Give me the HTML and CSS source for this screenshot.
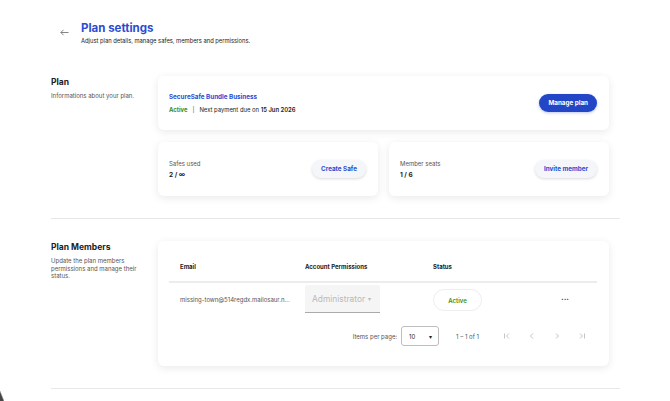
FILE: index.html
```html
<!DOCTYPE html>
<html>
    <head>
        <meta charset="utf-8">
        <meta name="viewport" content="width=device-width, initial-scale=1.0">
        <title>Plan settings</title>
        <link rel="stylesheet" href="styles.css">
    </head>
    <body>
        <div class="page">
            <div class="top">
                <button class="back" type="button" aria-label="Back">
                    <svg width="9" height="7" viewBox="0 0 9 7"><path d="M3.5 0.8 L0.9 3.5 L3.5 6.2 M0.9 3.5 H8.5" fill="none" stroke="#666" stroke-width="0.8"/></svg>
                </button>
                <div>
                    <h1>Plan settings</h1>
                    <p class="subtitle">Adjust plan details, manage safes, members and permissions.</p>
                </div>
            </div>

            <div class="section section--plan">
                <div class="section-info">
                    <h2>Plan</h2>
                    <p>Informations about your plan.</p>
                </div>
                <div class="section-body">
                    <div class="card plan-card">
                        <div>
                            <div class="plan-name">SecureSafe Bundle Business</div>
                            <div class="plan-status"><span class="green">Active</span><span class="sep">|</span>Next payment due on <b>15 Jun 2026</b></div>
                        </div>
                        <button class="btn btn--primary" type="button">Manage plan</button>
                    </div>
                    <div class="stats">
                        <div class="card stat-card">
                            <div>
                                <div class="stat-label">Safes used</div>
                                <div class="stat-value">2 / ∞</div>
                            </div>
                            <button class="btn btn--light" type="button">Create Safe</button>
                        </div>
                        <div class="card stat-card">
                            <div>
                                <div class="stat-label">Member seats</div>
                                <div class="stat-value">1 / 6</div>
                            </div>
                            <button class="btn btn--light" type="button">Invite member</button>
                        </div>
                    </div>
                </div>
            </div>

            <div class="divider"></div>

            <div class="section">
                <div class="section-info">
                    <h2>Plan Members</h2>
                    <p>Update the plan members permissions and manage their status.</p>
                </div>
                <div class="section-body">
                    <div class="card members-card">
                        <div class="table-row table-head">
                            <div class="cell">Email</div>
                            <div class="cell">Account Permissions</div>
                            <div class="cell">Status</div>
                            <div class="cell"></div>
                        </div>
                        <div class="table-row table-line">
                            <div class="cell email">missing-town@514regdx.mailosaur.n...</div>
                            <div class="cell">
                                <div class="perm-select">Administrator <span class="caret">▾</span></div>
                            </div>
                            <div class="cell">
                                <span class="status-pill">Active</span>
                            </div>
                            <div class="cell more">···</div>
                        </div>
                        <div class="paginator">
                            <span class="pg-label">Items per page:</span>
                            <div class="pg-select">10 <span class="caret">▾</span></div>
                            <span class="pg-range">1 – 1 of 1</span>
                            <div class="pg-nav">
                                <svg width="8" height="8" viewBox="0 0 8 8"><path d="M1.5 1.5 V6.5 M6 1.5 L3.5 4 L6 6.5" fill="none" stroke="#aaa" stroke-width="0.7"/></svg>
                                <svg width="8" height="8" viewBox="0 0 8 8"><path d="M5 1.5 L2.5 4 L5 6.5" fill="none" stroke="#aaa" stroke-width="0.7"/></svg>
                                <svg width="8" height="8" viewBox="0 0 8 8"><path d="M3 1.5 L5.5 4 L3 6.5" fill="none" stroke="#aaa" stroke-width="0.7"/></svg>
                                <svg width="8" height="8" viewBox="0 0 8 8"><path d="M2 1.5 L4.5 4 L2 6.5 M6.5 1.5 V6.5" fill="none" stroke="#aaa" stroke-width="0.7"/></svg>
                            </div>
                        </div>
                    </div>
                </div>
            </div>

            <div class="divider"></div>
        </div>
        <div class="corner"></div>
    </body>
</html>
```

FILE: styles.css
```css
:root {
    --blue: rgb(43, 76, 208);
    --blue-dark: rgb(35, 70, 198);
    --green: rgb(62, 140, 32);
    --text: rgb(34, 34, 34);
    --muted: rgb(85, 85, 85);
    --line: rgb(232, 232, 232);
}

body {
    margin: 0;
    background-color: #fff;
    color: var(--text);
    font-family: Inter, "Noto Sans", sans-serif;
    overflow: hidden;
}

.page {
    padding: 0 50px 0 51px;
}

.top {
    display: flex;
    align-items: flex-start;
    gap: 12px;
    padding: 22px 0 0 9px;
    height: 54px;
}

.back {
    border: none;
    background: none;
    padding: 0;
    margin-top: 7px;
    display: flex;
    cursor: pointer;
}

h1 {
    margin: 0;
    font-size: 11.5px;
    line-height: 13px;
    font-weight: 700;
    color: var(--blue);
}

.subtitle {
    margin: 2px 0 0;
    font-size: 5.8px;
    color: var(--text);
}

.section {
    display: flex;
    padding: 22px 0;
}

.section--plan {
    padding-top: 0;
}

.section-info {
    width: 107px;
    flex-shrink: 0;
    padding-top: 1px;
}

.section-info h2 {
    margin: 0 0 5px;
    font-size: 8.5px;
    font-weight: 700;
}

.section-info p {
    margin: 0;
    width: 86px;
    font-size: 6px;
    line-height: 7.5px;
    color: var(--muted);
}

.section-body {
    width: 451px;
    display: flex;
    flex-direction: column;
    gap: 12px;
}

.card {
    background-color: #fff;
    border-radius: 6px;
    box-shadow: 0 2px 9px rgba(0, 0, 0, 0.09);
}

.plan-card {
    height: 54px;
    box-sizing: border-box;
    display: flex;
    align-items: center;
    justify-content: space-between;
    padding: 0 12px 0 11px;
}

.plan-name {
    font-size: 6.3px;
    font-weight: 700;
    color: var(--blue);
    margin-bottom: 5px;
}

.plan-status {
    font-size: 5.9px;
    color: var(--text);
}

.plan-status b {
    font-weight: 600;
}

.green {
    color: var(--green);
    font-weight: 700;
}

.sep {
    margin: 0 5px;
    color: var(--muted);
}

.btn {
    height: 18px;
    border: none;
    border-radius: 9px;
    padding: 0 9px;
    font-family: inherit;
    font-size: 6.3px;
    font-weight: 700;
    cursor: pointer;
}

.btn--primary {
    background-color: var(--blue-dark);
    color: #fff;
    box-shadow: 0 1px 3px rgba(35, 70, 198, 0.3);
}

.btn--light {
    background-color: rgb(245, 246, 249);
    color: var(--blue);
    box-shadow: 0 1px 3px rgba(0, 0, 0, 0.15);
}

.stats {
    display: flex;
    gap: 11px;
}

.stat-card {
    flex: 1;
    height: 54px;
    box-sizing: border-box;
    display: flex;
    align-items: center;
    justify-content: space-between;
    padding: 0 12px 0 11px;
}

.stat-label {
    font-size: 6px;
    color: var(--muted);
    margin-bottom: 4px;
}

.stat-value {
    font-size: 6.5px;
    font-weight: 700;
}

.divider {
    height: 1px;
    background-color: var(--line);
}

.members-card {
    padding: 10px 12px 0 11px;
    height: 125px;
    box-sizing: border-box;
}

.table-row {
    display: grid;
    grid-template-columns: 125px 128px 1fr 42px;
    align-items: center;
}

.cell {
    padding-left: 11px;
}

.table-head {
    height: 30px;
    border-bottom: 2px solid rgb(236, 236, 236);
    font-size: 6px;
    font-weight: 700;
}

.table-line {
    height: 32px;
}

.email {
    font-size: 6px;
    color: var(--muted);
    white-space: nowrap;
}

.perm-select {
    width: 75px;
    height: 28px;
    box-sizing: border-box;
    background-color: rgb(245, 245, 245);
    border-bottom: 1px solid rgb(170, 170, 170);
    display: flex;
    align-items: center;
    padding-left: 7px;
    font-size: 8.4px;
    color: rgb(185, 185, 185);
    border-radius: 2px 2px 0 0;
}

.caret {
    font-size: 6px;
    margin-left: 3px;
}

.status-pill {
    display: inline-flex;
    align-items: center;
    justify-content: center;
    width: 49px;
    height: 22px;
    box-sizing: border-box;
    border: 1px solid rgb(238, 238, 238);
    border-radius: 11px;
    font-size: 6px;
    font-weight: 600;
    color: var(--green);
}

.more {
    font-size: 8px;
    font-weight: 700;
    color: var(--text);
    padding-left: 6px;
}

.paginator {
    display: flex;
    align-items: center;
    justify-content: flex-end;
    height: 42px;
    padding-right: 11px;
    font-size: 6px;
    color: var(--muted);
}

.pg-select {
    width: 38px;
    height: 20px;
    box-sizing: border-box;
    border: 1px solid rgb(190, 190, 190);
    border-radius: 3px;
    margin: 0 17px 0 4px;
    display: flex;
    align-items: center;
    justify-content: space-between;
    padding: 0 6px 0 7px;
    color: var(--text);
}

.pg-nav {
    display: flex;
    gap: 17px;
    margin-left: 24px;
}

.corner {
    position: fixed;
    left: 0;
    bottom: 0;
    width: 4px;
    height: 10px;
    background: linear-gradient(to top right, rgb(70, 70, 70) 40%, transparent 60%);
}
```
